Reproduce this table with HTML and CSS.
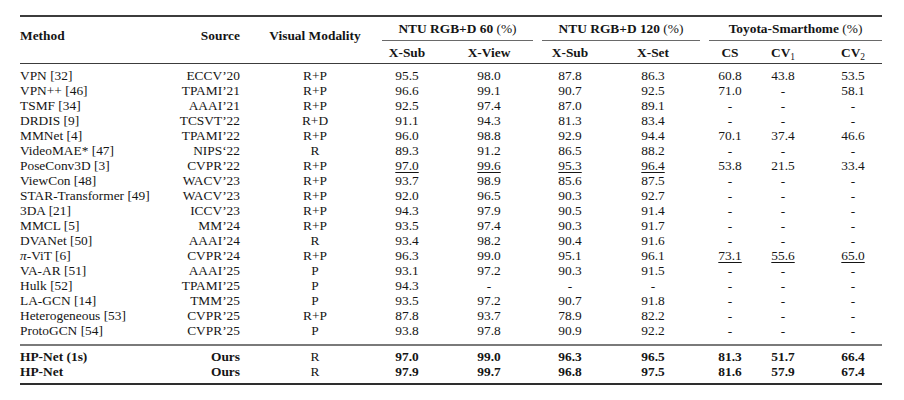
FILE: index.html
```html
<!DOCTYPE html>
<html lang="en">
<head>
<meta charset="UTF-8" />
<title>Comparison with state-of-the-art methods</title>
<link rel="stylesheet" href="styles.css">
</head>
<body>
  <table class="results">
    <colgroup>
      <col class="c-method"><col class="c-source"><col class="c-mod">
      <col class="c-sub60"><col class="c-view60">
      <col class="c-sub120"><col class="c-set120">
      <col class="c-cs"><col class="c-cv1"><col class="c-cv2">
    </colgroup>
    <thead>
      <tr class="top">
        <th rowspan="2" class="multi left">Method</th>
        <th rowspan="2" class="multi right">Source</th>
        <th rowspan="2" class="multi">Visual Modality</th>
        <th colspan="2" class="grp"><div>NTU RGB+D 60 <span class="pct">(%)</span></div></th>
        <th colspan="2" class="grp g120"><div>NTU RGB+D 120 <span class="pct">(%)</span></div></th>
        <th colspan="3" class="grp gtoy"><div>Toyota-Smarthome <span class="pct">(%)</span></div></th>
      </tr>
      <tr class="sub">
        <th>X-Sub</th>
        <th class="view60">X-View</th>
        <th>X-Sub</th>
        <th class="set120">X-Set</th>
        <th>CS</th>
        <th>CV<sub>1</sub></th>
        <th class="cv2">CV<sub>2</sub></th>
      </tr>
    </thead>
    <tbody class="others">
      <tr><td class="left">VPN [32]</td><td class="right">ECCV’20</td><td>R+P</td><td>95.5</td><td class="view60">98.0</td><td>87.8</td><td class="set120">86.3</td><td>60.8</td><td>43.8</td><td class="cv2">53.5</td></tr>
      <tr><td class="left">VPN++ [46]</td><td class="right">TPAMI’21</td><td>R+P</td><td>96.6</td><td class="view60">99.1</td><td>90.7</td><td class="set120">92.5</td><td>71.0</td><td>-</td><td class="cv2">58.1</td></tr>
      <tr><td class="left">TSMF [34]</td><td class="right">AAAI’21</td><td>R+P</td><td>92.5</td><td class="view60">97.4</td><td>87.0</td><td class="set120">89.1</td><td>-</td><td>-</td><td class="cv2">-</td></tr>
      <tr><td class="left">DRDIS [9]</td><td class="right">TCSVT’22</td><td>R+D</td><td>91.1</td><td class="view60">94.3</td><td>81.3</td><td class="set120">83.4</td><td>-</td><td>-</td><td class="cv2">-</td></tr>
      <tr><td class="left">MMNet [4]</td><td class="right">TPAMI’22</td><td>R+P</td><td>96.0</td><td class="view60">98.8</td><td>92.9</td><td class="set120">94.4</td><td>70.1</td><td>37.4</td><td class="cv2">46.6</td></tr>
      <tr><td class="left">VideoMAE* [47]</td><td class="right">NIPS‘22</td><td>R</td><td>89.3</td><td class="view60">91.2</td><td>86.5</td><td class="set120">88.2</td><td>-</td><td>-</td><td class="cv2">-</td></tr>
      <tr><td class="left">PoseConv3D [3]</td><td class="right">CVPR’22</td><td>R+P</td><td><u>97.0</u></td><td class="view60"><u>99.6</u></td><td><u>95.3</u></td><td class="set120"><u>96.4</u></td><td>53.8</td><td>21.5</td><td class="cv2">33.4</td></tr>
      <tr><td class="left">ViewCon [48]</td><td class="right">WACV’23</td><td>R+P</td><td>93.7</td><td class="view60">98.9</td><td>85.6</td><td class="set120">87.5</td><td>-</td><td>-</td><td class="cv2">-</td></tr>
      <tr><td class="left">STAR-Transformer [49]</td><td class="right">WACV’23</td><td>R+P</td><td>92.0</td><td class="view60">96.5</td><td>90.3</td><td class="set120">92.7</td><td>-</td><td>-</td><td class="cv2">-</td></tr>
      <tr><td class="left">3DA [21]</td><td class="right">ICCV’23</td><td>R+P</td><td>94.3</td><td class="view60">97.9</td><td>90.5</td><td class="set120">91.4</td><td>-</td><td>-</td><td class="cv2">-</td></tr>
      <tr><td class="left">MMCL [5]</td><td class="right">MM’24</td><td>R+P</td><td>93.5</td><td class="view60">97.4</td><td>90.3</td><td class="set120">91.7</td><td>-</td><td>-</td><td class="cv2">-</td></tr>
      <tr><td class="left">DVANet [50]</td><td class="right">AAAI’24</td><td>R</td><td>93.4</td><td class="view60">98.2</td><td>90.4</td><td class="set120">91.6</td><td>-</td><td>-</td><td class="cv2">-</td></tr>
      <tr><td class="left"><i>π</i>-ViT [6]</td><td class="right">CVPR’24</td><td>R+P</td><td>96.3</td><td class="view60">99.0</td><td>95.1</td><td class="set120">96.1</td><td><u>73.1</u></td><td><u>55.6</u></td><td class="cv2"><u>65.0</u></td></tr>
      <tr><td class="left">VA-AR [51]</td><td class="right">AAAI’25</td><td>P</td><td>93.1</td><td class="view60">97.2</td><td>90.3</td><td class="set120">91.5</td><td>-</td><td>-</td><td class="cv2">-</td></tr>
      <tr><td class="left">Hulk [52]</td><td class="right">TPAMI’25</td><td>P</td><td>94.3</td><td class="view60">-</td><td>-</td><td class="set120">-</td><td>-</td><td>-</td><td class="cv2">-</td></tr>
      <tr><td class="left">LA-GCN [14]</td><td class="right">TMM’25</td><td>P</td><td>93.5</td><td class="view60">97.2</td><td>90.7</td><td class="set120">91.8</td><td>-</td><td>-</td><td class="cv2">-</td></tr>
      <tr><td class="left">Heterogeneous [53]</td><td class="right">CVPR’25</td><td>R+P</td><td>87.8</td><td class="view60">93.7</td><td>78.9</td><td class="set120">82.2</td><td>-</td><td>-</td><td class="cv2">-</td></tr>
      <tr><td class="left">ProtoGCN [54]</td><td class="right">CVPR’25</td><td>P</td><td>93.8</td><td class="view60">97.8</td><td>90.9</td><td class="set120">92.2</td><td>-</td><td>-</td><td class="cv2">-</td></tr>
    </tbody>
    <tbody class="ours">
      <tr><td class="left">HP-Net (1s)</td><td class="right">Ours</td><td class="plain">R</td><td>97.0</td><td class="view60">99.0</td><td>96.3</td><td class="set120">96.5</td><td>81.3</td><td>51.7</td><td class="cv2">66.4</td></tr>
      <tr><td class="left">HP-Net</td><td class="right">Ours</td><td class="plain">R</td><td>97.9</td><td class="view60">99.7</td><td>96.8</td><td class="set120">97.5</td><td>81.6</td><td>57.9</td><td class="cv2">67.4</td></tr>
    </tbody>
  </table>
</body>
</html>
```

FILE: styles.css
```css
body {
  margin: 0;
  background: #fff;
  color: #151515;
  font-family: "Liberation Serif", "Times New Roman", serif;
  font-size: 13.4px;
}
.results {
  margin: 15px 0 0 20px;
  width: 862px;
  table-layout: fixed;
  border-collapse: separate;
  border-spacing: 0;
}
.c-method { width: 150px; }
.c-source { width: 82px; }
.c-mod { width: 126px; }
.c-sub60 { width: 58px; }
.c-view60 { width: 101px; }
.c-sub120 { width: 66px; }
.c-set120 { width: 102px; }
.c-cs { width: 50px; }
.c-cv1 { width: 56px; }
.c-cv2 { width: 71px; }

th, td {
  padding: 0;
  line-height: 15px;
  text-align: center;
  white-space: nowrap;
}
th { font-weight: 700; }
.left { text-align: left; }
.right { text-align: right; padding-right: 12px; }
.view60 { padding-left: 5px; }
.set120 { padding-right: 2px; }
.cv2 { padding-left: 13px; }

/* header */
thead tr.top th {
  border-top: 2px solid #3c3c3c;
  padding-top: 4px;
}
thead tr.top th.multi {
  vertical-align: top;
  padding-top: 11px;
  border-bottom: 1px solid #3c3c3c;
}
th.grp div {
  margin: 0 4px;
  padding-bottom: 4px;
  border-bottom: 1px solid #6a6a6a;
}
th.g120 div { margin: 0 5px; }
th.gtoy div { margin: 0 0 0 4px; }
.pct { font-weight: 400; }
thead tr.sub th {
  padding-top: 4px;
  padding-bottom: 3px;
  border-bottom: 1px solid #3c3c3c;
}
sub {
  font-size: 9.5px;
  font-weight: 400;
  line-height: 0;
  vertical-align: -3px;
}

/* body */
tbody.others tr:first-child td { padding-top: 4px; }
tbody.others tr:last-child td {
  padding-bottom: 6px;
  border-bottom: 2px solid #7a7a7a;
}
tbody.ours td { font-weight: 700; }
tbody.ours td.plain { font-weight: 400; }
tbody.ours tr:first-child td { padding-top: 3px; }
tbody.ours tr:last-child td {
  padding-bottom: 4px;
  border-bottom: 2px solid #2e2e2e;
}
u {
  text-decoration-thickness: 1px;
  text-underline-offset: 2px;
}
```
